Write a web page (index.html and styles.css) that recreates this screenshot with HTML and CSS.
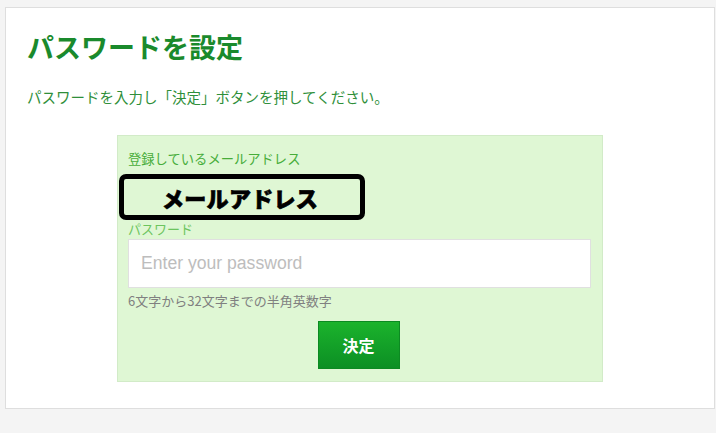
FILE: index.html
```html
<!DOCTYPE html>
<html lang="ja">
<head>
<meta charset="utf-8">
<link rel="stylesheet" href="styles.css">
</head>
<body>
<div class="card">
  <h1 class="title">パスワードを設定</h1>
  <p class="lead">パスワードを入力し「決定」ボタンを押してください。</p>
  <div class="panel">
    <div class="label-email">登録しているメールアドレス</div>
    <div class="email-wrap">
      <div class="email-mask">メールアドレス</div>
    </div>
    <div class="label-pw">パスワード</div>
    <input class="pw-input" type="password" placeholder="Enter your password">
    <div class="hint">6文字から32文字までの半角英数字</div>
    <div class="actions">
      <button class="submit" type="button">決定</button>
    </div>
  </div>
</div>
</body>
</html>
```

FILE: styles.css
```css
html, body {
  margin: 0;
  padding: 0;
  background: #f4f4f4;
  font-family: "Noto Sans CJK JP", "Liberation Sans", sans-serif;
}
.card {
  box-sizing: border-box;
  margin: 7px 0 0 5px;
  width: 710px;
  height: 402px;
  background: #fff;
  border: 1px solid #dedede;
  padding: 21px 0 0 21px;
}
.title {
  margin: 0;
  font-size: 27px;
  line-height: 36px;
  font-weight: bold;
  color: #1a8a2c;
}
.lead {
  margin: 22px 0 0 0;
  font-size: 14.5px;
  line-height: 20px;
  color: #2f8f3a;
}
.panel {
  box-sizing: border-box;
  margin: 28px 0 0 90px;
  width: 486px;
  height: 247px;
  background: #dff7d4;
  border: 1px solid #d2ebc8;
  padding: 14px 11px 0 10px;
}
.label-email {
  font-size: 13.3px;
  line-height: 18px;
  color: #47ad3a;
}
.email-wrap {
  position: relative;
  height: 58px;
}
.email-mask {
  position: absolute;
  left: -9px;
  top: 6px;
  box-sizing: border-box;
  width: 246px;
  height: 46px;
  border: 5px solid #000;
  border-radius: 7px;
  padding-left: 38px;
  font-size: 22px;
  line-height: 36px;
  font-weight: 900;
  color: #000;
  -webkit-text-stroke: 0.7px #000;
  letter-spacing: 0.3px;
}
.label-pw {
  margin-top: -5px;
  font-size: 13px;
  line-height: 16px;
  color: #6cc45e;
}
.pw-input {
  display: block;
  box-sizing: border-box;
  margin-top: 2px;
  width: 463px;
  height: 49px;
  border: 1px solid #e0e0e0;
  background: #fff;
  padding: 0 12px;
  font-family: "Liberation Sans", Arial, sans-serif;
  font-size: 17.6px;
  outline: none;
}
.pw-input::placeholder {
  color: #bdbdbd;
}
.hint {
  margin-top: 5px;
  font-size: 13px;
  line-height: 16px;
  color: #808080;
}
.actions {
  display: flex;
  justify-content: center;
  margin-top: 12px;
}
.submit {
  width: 82px;
  height: 48px;
  border: 1px solid #0c8a22;
  background: linear-gradient(#1bb32c, #0c8f24);
  color: #fff;
  font-family: "Noto Sans CJK JP", sans-serif;
  font-size: 16px;
  font-weight: bold;
  padding: 0;
  cursor: pointer;
  margin-left: -2px;
}
```
